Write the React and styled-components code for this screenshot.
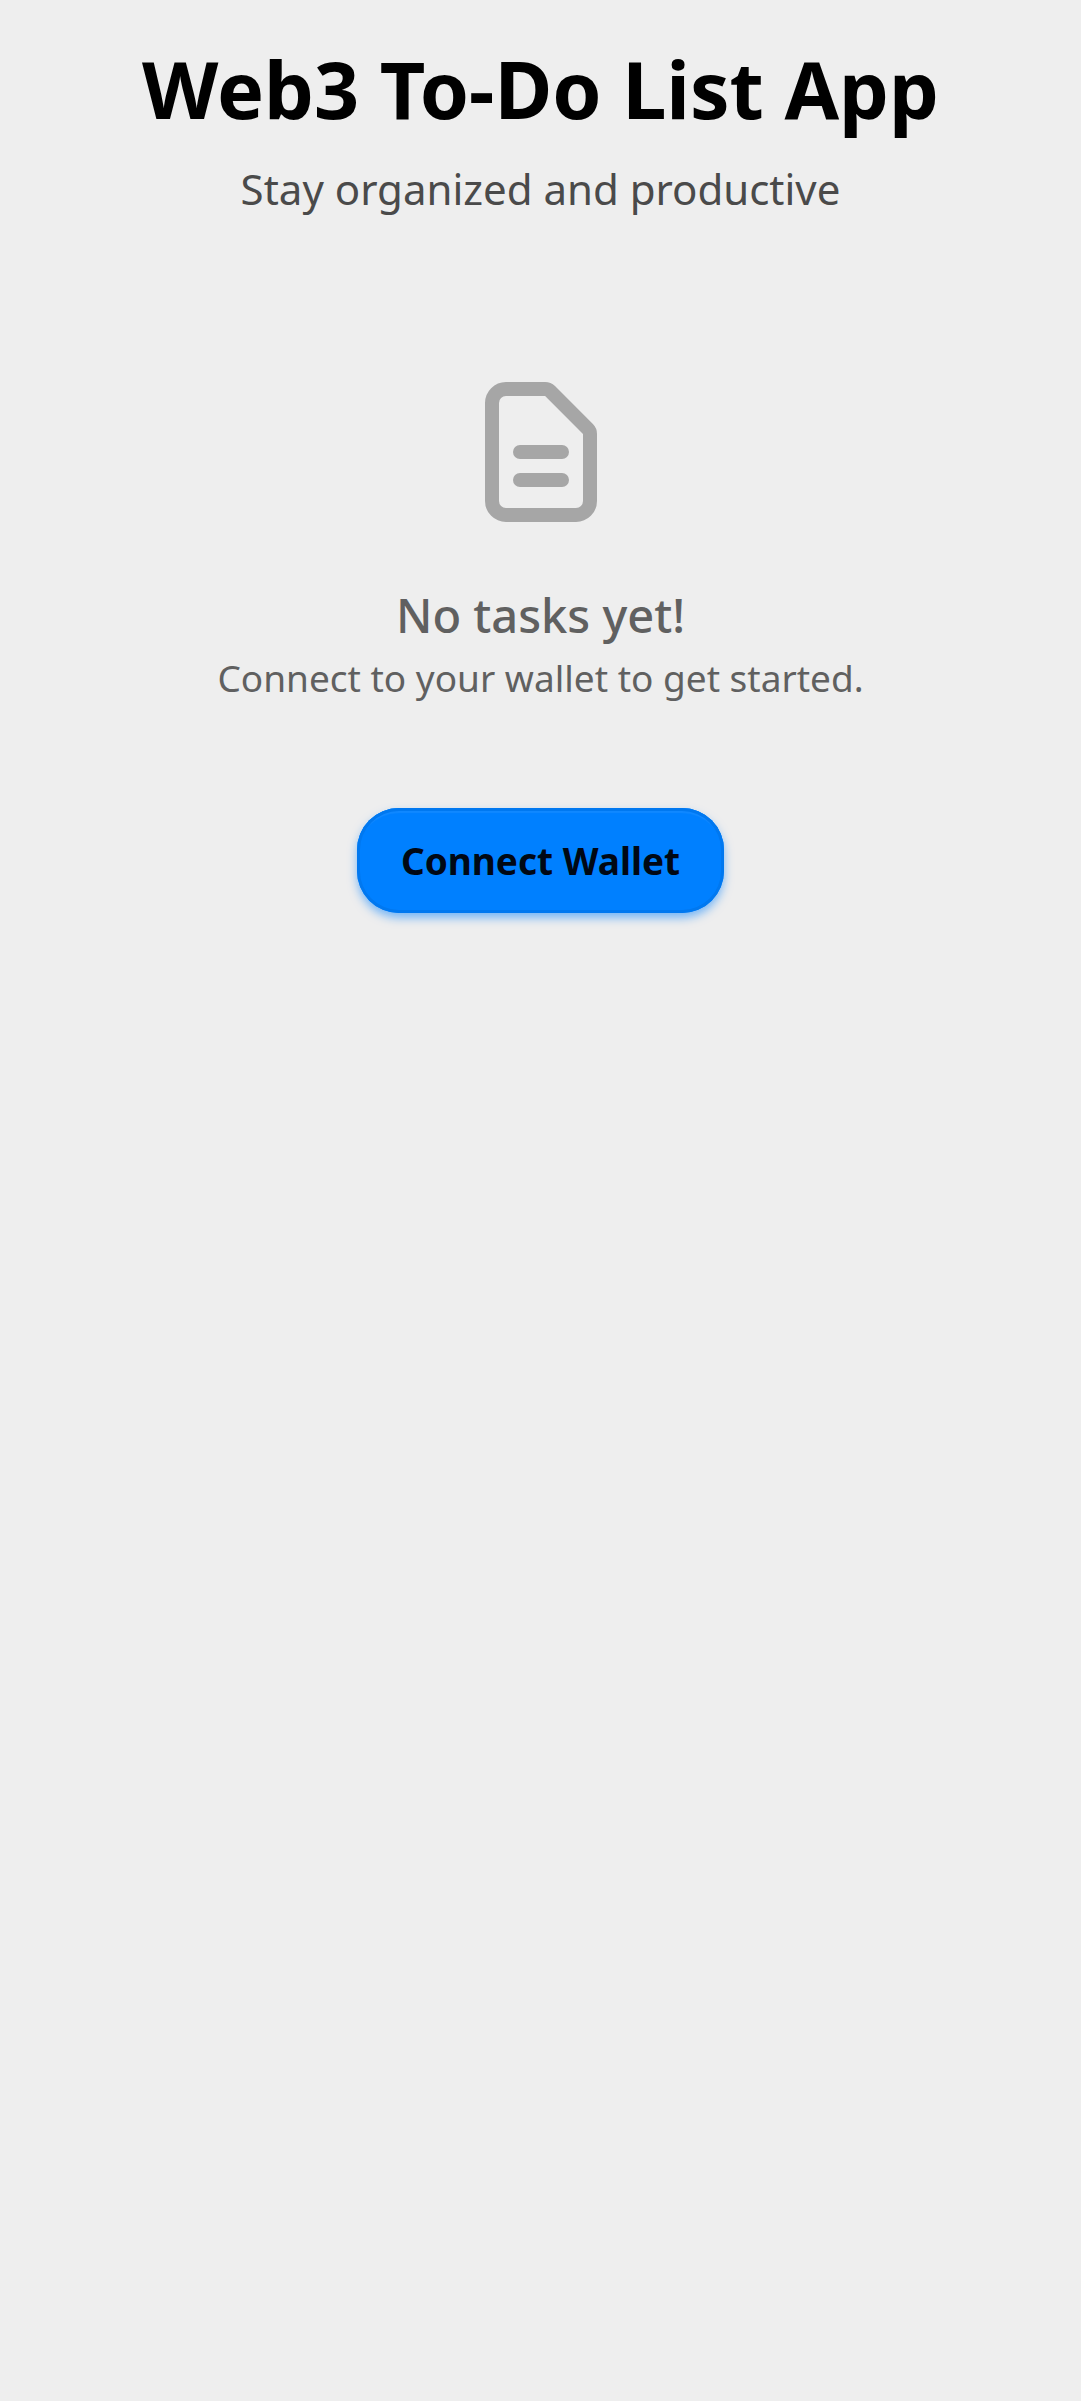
import React from 'react';
import styled, { createGlobalStyle } from 'styled-components';

const GlobalStyle = createGlobalStyle`
  * { box-sizing: border-box; }
  body {
    margin: 0;
    background: #eeeeee;
    color: #000;
    font-family: "Noto Sans", sans-serif;
  }
`;

const Page = styled.main`
  min-height: 100vh;
  padding: 35px 24px;
  display: flex;
  flex-direction: column;
  align-items: center;
  text-align: center;
`;

const Title = styled.h1`
  margin: 0;
  font-size: 79px;
  line-height: 108px;
  font-weight: 700;
`;

const Tagline = styled.p`
  margin: 16px 0 0;
  font-size: 42px;
  line-height: 60px;
  color: #4a4a4a;
`;

const EmptyState = styled.section`
  margin-top: 149px;
  display: flex;
  flex-direction: column;
  align-items: center;
  color: #606060;
`;

const DocumentIcon = styled.svg`
  width: 168px;
  height: 168px;
  color: #a6a6a6;
`;

const EmptyTitle = styled.h2`
  margin: 48px 0 0;
  font-size: 47px;
  line-height: 62px;
  font-weight: 500;
`;

const EmptyText = styled.p`
  margin: 6px 0 0;
  font-size: 37px;
  line-height: 52px;
`;

const ConnectButton = styled.button`
  margin-top: 104px;
  padding: 24px 44px;
  border: 0;
  border-radius: 42px;
  background: #0080ff;
  box-shadow:
    0 5px 10px rgba(0, 128, 255, 0.5),
    inset 0 0 0 3px #0078f0,
    inset 0 5px 1px #1088ff;
  color: #000814;
  font: 700 37px/57px "Noto Sans", sans-serif;
  cursor: pointer;
`;

export default function App() {
  return (
    <>
      <GlobalStyle />
      <Page>
        <Title>Web3 To-Do List App</Title>
        <Tagline>Stay organized and productive</Tagline>
        <EmptyState>
          <DocumentIcon
            viewBox="0 0 24 24"
            fill="none"
            stroke="currentColor"
            strokeWidth="2"
            strokeLinecap="round"
            strokeLinejoin="round"
            aria-hidden="true"
          >
            <path d="M9 12h6m-6 4h6m2 5H7a2 2 0 01-2-2V5a2 2 0 012-2h5.586a1 1 0 01.707.293l5.414 5.414a1 1 0 01.293.707V19a2 2 0 01-2 2z" />
          </DocumentIcon>
          <EmptyTitle>No tasks yet!</EmptyTitle>
          <EmptyText>Connect to your wallet to get started.</EmptyText>
        </EmptyState>
        <ConnectButton type="button">Connect Wallet</ConnectButton>
      </Page>
    </>
  );
}
